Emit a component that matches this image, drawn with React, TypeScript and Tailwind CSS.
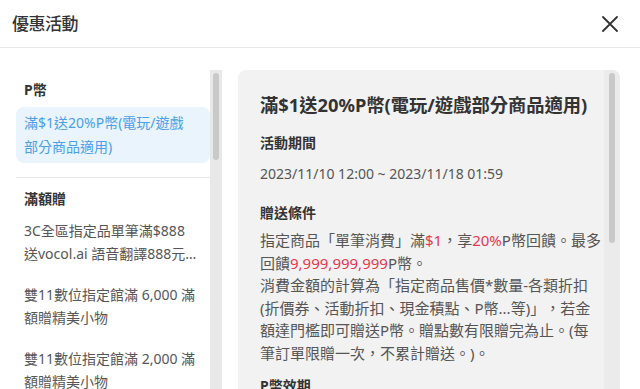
import { Fragment } from "react";

const font = {
  fontFamily: '"Noto Sans", "Noto Sans CJK TC", sans-serif',
};

const otherPromos = [
  "3C全區指定品單筆滿$888送vocol.ai 語音翻譯888元抵用券",
  "雙11數位指定館滿 6,000 滿額贈精美小物",
  "雙11數位指定館滿 2,000 滿額贈精美小物",
  "雙11數位指定館滿 1,000 滿額贈精美小物",
];

function CloseIcon() {
  return (
    <svg width="16" height="16" viewBox="0 0 16 16" fill="none">
      <path
        d="M1 1L15 15M15 1L1 15"
        stroke="#333"
        strokeWidth="1.8"
        strokeLinecap="round"
      />
    </svg>
  );
}

function Scrollbar({ thumb, track }: { thumb: string; track: string }) {
  return (
    <div className={`w-[12px] shrink-0 flex justify-center pt-[3px] ${track}`}>
      <div className={`w-[6px] rounded-full bg-[#c9c9c9] ${thumb}`} />
    </div>
  );
}

export default function App() {
  return (
    <div
      className="h-[389px] w-[640px] overflow-hidden bg-white text-[#555]"
      style={font}
    >
      <div className="h-[48px] flex items-center justify-between pl-3 pr-[22px] border-b border-[#e6e6e6]">
        <h1 className="text-[17px] font-medium text-[#333] tracking-[-0.5px]">
          優惠活動
        </h1>
        <button className="p-0">
          <CloseIcon />
        </button>
      </div>

      <div className="flex pt-[22px] pl-4 pr-5 gap-4">
        <div className="flex w-[206px] shrink-0 h-[400px]">
          <div className="flex-1 overflow-hidden">
            <h2 className="mt-[9px] px-2 text-[14px] leading-[22px] font-bold text-[#333]">
              P幣
            </h2>
            <div className="mt-[6px] rounded-lg bg-[#e9f4fd] pl-2 pr-[13px] py-[4px] text-[14px] leading-[24px] text-[#4a9fe6]">
              滿$1送20%P幣(電玩/遊戲部分商品適用)
            </div>
            <hr className="mt-[14px] border-[#e8e8e8]" />
            <h2 className="mt-[10px] px-2 text-[14px] leading-[22px] font-bold text-[#333]">
              滿額贈
            </h2>
            <div className="mt-[5px] flex flex-col gap-[10px]">
              {otherPromos.map((p) => (
                <div
                  key={p}
                  className="pl-2 pr-[13px] py-[4px] text-[14px] leading-[23px] text-[#555] line-clamp-2"
                >
                  {p}
                </div>
              ))}
            </div>
          </div>
          <Scrollbar track="bg-[#e8e8e8]" thumb="h-[87px]" />
        </div>

        <div className="flex flex-1 rounded-lg bg-[#f2f2f2] h-[420px] overflow-hidden">
          <div className="flex-1 pl-[22px] pr-[1px] pt-[22px]">
            <h2 className="text-[18.3px] leading-[26px] font-bold text-[#333] whitespace-nowrap">
              滿$1送20%P幣(電玩/遊戲部分商品適用)
            </h2>
            <h3 className="mt-[14px] text-[14px] leading-[22px] font-bold text-[#333]">
              活動期間
            </h3>
            <p className="mt-[9px] text-[14px] leading-[22px]">
              2023/11/10 12:00 ~ 2023/11/18 01:59
            </p>
            <h3 className="mt-[17px] text-[14px] leading-[22px] font-bold text-[#333]">
              贈送條件
            </h3>
            <p className="mt-[5px] text-[15px] leading-[22.5px] [text-spacing-trim:space-all]">
              指定商品「單筆消費」滿<span className="text-[#e8384f]">$1</span>
              ，享<span className="text-[#e8384f]">20%</span>P幣回饋。最多回饋
              <span className="text-[#e8384f]">9,999,999,999</span>P幣。
              <br />
              消費金額的計算為「指定商品售價*數量-各類折扣(折價券、活動折扣、現金積點、P幣...等)」，若金額達門檻即可贈送P幣。贈點數有限贈完為止。(每筆訂單限贈一次，不累計贈送。)。
            </p>
            <h3 className="mt-[11px] text-[14px] leading-[22px] font-bold text-[#333]">
              P幣效期
            </h3>
          </div>
          <Scrollbar track="bg-[#ebebeb] w-[16px]" thumb="h-[170px]" />
        </div>
      </div>
    </div>
  );
}
